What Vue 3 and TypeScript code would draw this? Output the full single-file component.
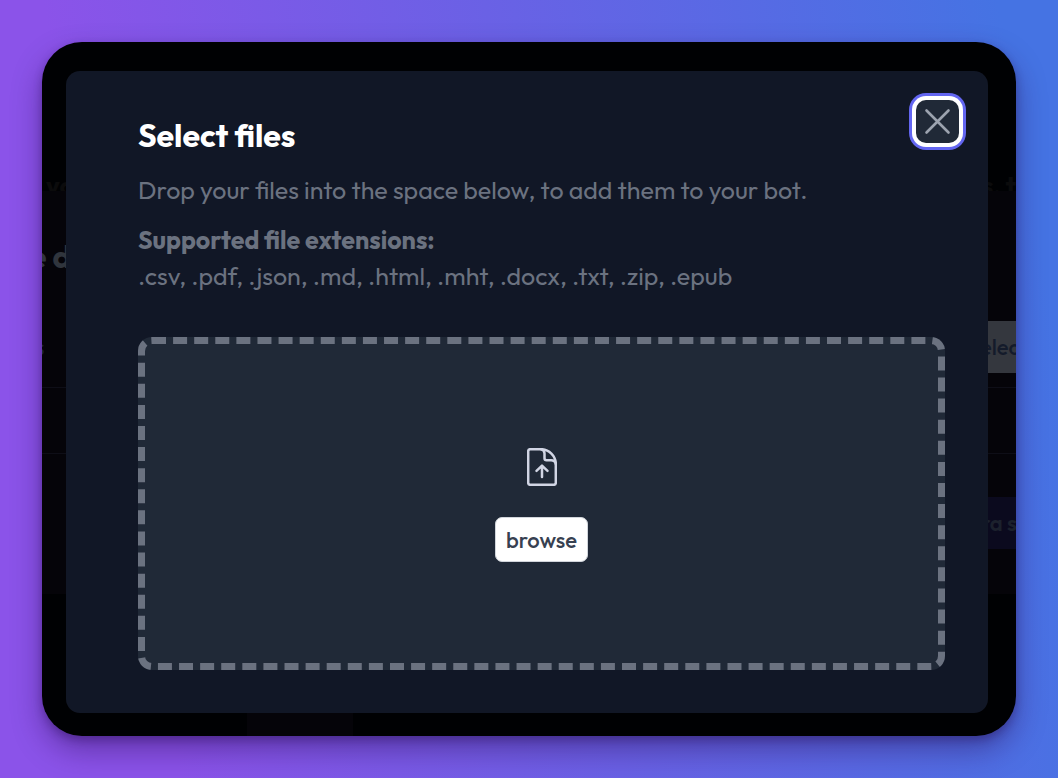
<script setup lang="ts">
import { ref } from 'vue'

const extensions: string[] = ['.csv', '.pdf', '.json', '.md', '.html', '.mht', '.docx', '.txt', '.zip', '.epub']
const open = ref(true)
const picker = ref<HTMLInputElement | null>(null)

function browse(): void {
  picker.value?.click()
}
</script>

<template>
  <main class="stage">
    <div class="window">
      <div class="behind" aria-hidden="true">
        <div class="intro"><span>yo</span><span>s, t</span></div>
        <div class="card">
          <div class="row head"><span class="heading">e d</span></div>
          <div class="row pick"><span class="source">s</span><span class="pale">elect</span></div>
          <div class="row"></div>
          <div class="row save"><span></span><span class="indigo">ra s</span></div>
        </div>
        <div class="chip"></div>
      </div>

      <section v-if="open" class="dialog" role="dialog" aria-labelledby="dialog-title">
        <button class="close" type="button" aria-label="Close" @click="open = false">
          <svg viewBox="0 0 27 27" width="27" height="27" fill="none" stroke="currentColor" stroke-width="2.6" stroke-linecap="round">
            <path d="M2.500 2.500L24.500 24.500M24.500 2.500L2.500 24.500" />
          </svg>
        </button>
        <h1 id="dialog-title">Select files</h1>
        <p class="lead">Drop your files into the space below, to add them to your bot.</p>
        <p class="formats"><strong>Supported file extensions:</strong><br />{{ extensions.join(', ') }}</p>
        <div class="dropzone">
          <svg class="file" viewBox="0 0 30 38" width="30" height="38" fill="none" stroke="currentColor" stroke-width="2.5" stroke-linecap="round" stroke-linejoin="round">
            <path d="M14 1.200H3.200Q1.200 1.200 1.200 3.200V34.800Q1.200 36.800 3.200 36.800H26.800Q28.800 36.800 28.800 34.800V16C28.800 8 22 1.200 14 1.200Z" />
            <path d="M14 1.200Q17.500 1.800 17.500 5.500V10.200Q17.500 12.200 19.500 12.200H24Q28.200 12.200 28.800 16" />
            <path d="M15 29V18M9.500 22.800L15 17.600L20.500 22.800" />
          </svg>
          <button class="browse" type="button" @click="browse">browse</button>
          <input ref="picker" type="file" multiple hidden aria-label="Files" :accept="extensions.join(',')" />
        </div>
      </section>
    </div>
  </main>
</template>

<style>
body {
  margin: 0;
}
</style>

<style scoped>
* {
  box-sizing: border-box;
}
.stage {
  display: flex;
  min-height: 100vh;
  padding: 42px;
  background: linear-gradient(80deg, #8b53e9 15%, #6a61e5 52%, #4573e3 95%);
  font-family: Outfit, Lato, sans-serif;
}
.window {
  position: relative;
  display: flex;
  flex: 1;
  padding: 29px 28px 23px 24px;
  overflow: hidden;
  border-radius: 40px;
  background: #000103;
  box-shadow: 0 14px 30px rgb(40 10 80 / 42%), 0 4px 8px rgb(30 10 70 / 30%);
}
.behind {
  position: absolute;
  inset: 0;
  display: flex;
  flex-direction: column;
}
.intro {
  display: flex;
  align-items: flex-start;
  justify-content: space-between;
  height: 149px;
  padding: 132px 0 0 4px;
  overflow: hidden;
  color: #0b0b0c;
  font-size: 26px;
  font-weight: 700;
  line-height: 24px;
}
.card {
  background: #050409;
}
.row {
  display: flex;
  align-items: center;
  justify-content: space-between;
  height: 66px;
  border-bottom: 1px solid #0e0e17;
}
.row.head {
  height: 130px;
  border: 0;
}
.row.pick {
  height: 67px;
  align-items: flex-start;
}
.row.save {
  height: 140px;
  align-items: flex-start;
  padding-top: 43px;
  border: 0;
}
.heading {
  margin-left: -13px;
  color: #30353d;
  font-size: 32px;
  font-weight: 700;
}
.source {
  margin: 13px 0 0 -7px;
  color: #1d2633;
  font-size: 22px;
  line-height: 26px;
}
.pale,
.indigo {
  width: 36px;
  height: 52px;
  overflow: hidden;
  font-size: 22px;
  font-weight: 500;
  line-height: 52px;
  white-space: nowrap;
}
.pale {
  background: #34373e;
  color: #141b2b;
}
.indigo {
  background: #0b0a1e;
  color: #1c212d;
  font-weight: 600;
  text-indent: 1px;
}
.chip {
  flex: 1;
  width: 106px;
  margin: 78px 0 0 205px;
  border-radius: 14px 14px 0 0;
  background: #050409;
}
.dialog {
  position: relative;
  display: flex;
  flex: 1;
  flex-direction: column;
  padding: 44px 43px 43px 72px;
  border-radius: 14px;
  background: #111726;
  color: #6b7280;
}
.close {
  position: absolute;
  top: 29px;
  right: 29px;
  display: grid;
  place-items: center;
  width: 43px;
  height: 43px;
  padding: 0;
  border: 0;
  border-radius: 10px;
  background: #202937;
  box-shadow: 0 0 0 4px #fff, 0 0 0 7px #6366f1;
  color: #9ca3af;
}
h1 {
  margin: 0;
  color: #fff;
  font-size: 32px;
  font-weight: 700;
  line-height: 40px;
}
p {
  margin: 0;
  font-size: 25px;
  font-weight: 450;
  line-height: 36px;
}
.lead {
  margin-top: 17px;
}
.formats {
  margin: 14px 0 43px;
}
.dropzone {
  display: flex;
  flex: 1;
  flex-direction: column;
  align-items: center;
  justify-content: center;
  gap: 31px;
  padding-top: 3px;
  border: 7px dashed #6b7280;
  border-radius: 14px;
  background: #202937;
}
.file {
  color: #d1d5e4;
}
.browse {
  height: 45px;
  padding: 0 10px;
  border: 1px solid #d1d5db;
  border-radius: 7px;
  background: #fff;
  color: #374151;
  font-family: inherit;
  font-size: 22px;
  font-weight: 500;
}
</style>
